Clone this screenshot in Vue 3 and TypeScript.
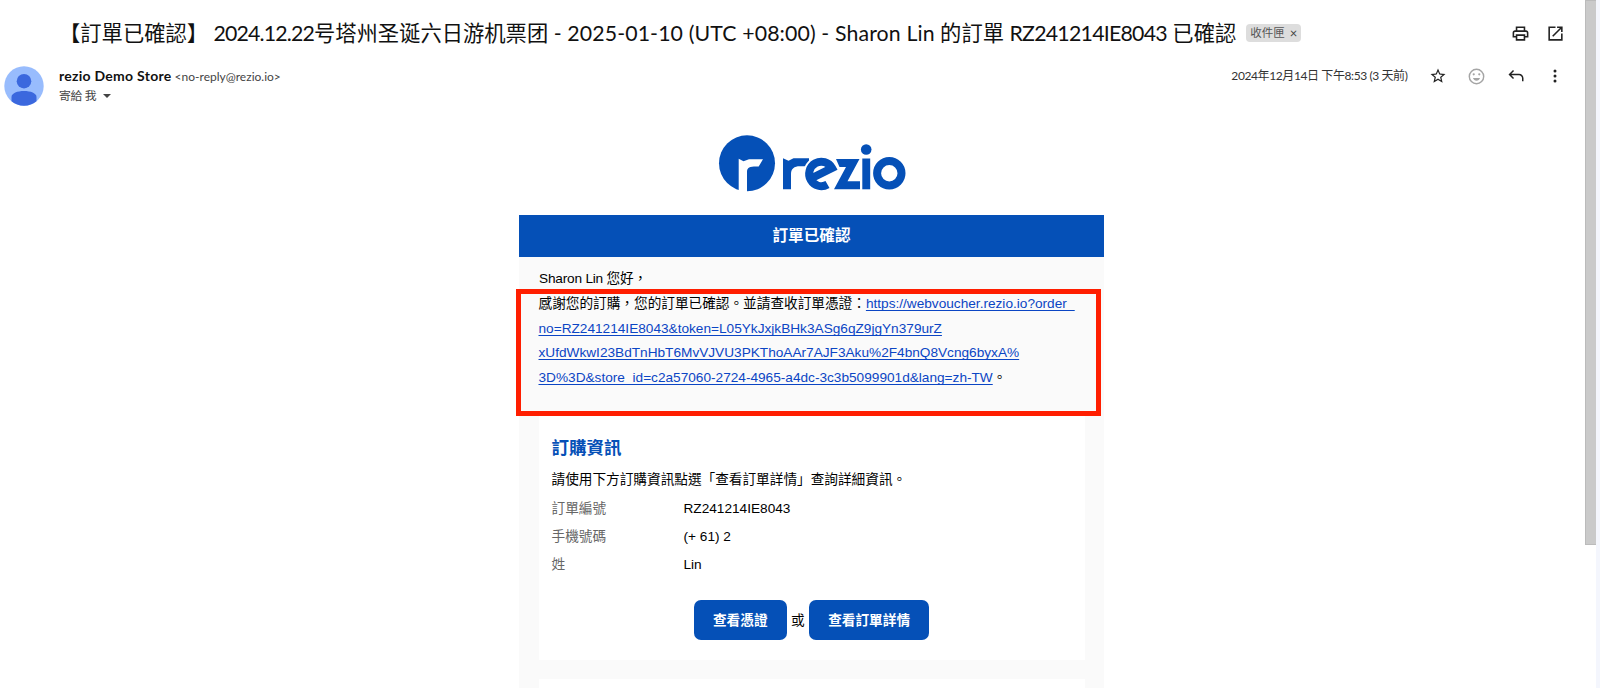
<script setup lang="ts">
import { ref } from 'vue'

interface OrderField {
  label: string
  value: string
}

const labelVisible = ref(true)
const starred = ref(false)

const fields: OrderField[] = [
  { label: '訂單編號', value: 'RZ241214IE8043' },
  { label: '手機號碼', value: '(+ 61) 2' },
  { label: '姓', value: 'Lin' },
]

const voucherLines = [
  'https://webvoucher.rezio.io?order_',
  'no=RZ241214IE8043&token=L05YkJxjkBHk3ASg6qZ9jgYn379urZ',
  'xUfdWkwI23BdTnHbT6MvVJVU3PKThoAAr7AJF3Aku%2F4bnQ8Vcng6byxA%',
  '3D%3D&store_id=c2a57060-2724-4965-a4dc-3c3b5099901d&lang=zh-TW',
]
</script>

<template>
  <div class="page">
    <main class="mail">
      <header class="subject">
        <h1>【訂單已確認】 <span class="day">2024.12.22</span>号塔州圣诞六日游机票团 <span class="slot">- 2025-01-10 (UTC +08:00) - Sharon Lin</span> 的訂單 <span class="order-no">RZ241214IE8043</span> 已確認</h1>
        <span v-if="labelVisible" class="chip">
          收件匣
          <button type="button" @click="labelVisible = false">×</button>
        </span>
        <div class="subject-actions">
          <svg viewBox="0 0 24 24" width="19" height="19">
            <path d="M19 8h-1V3H6v5H5c-1.66 0-3 1.34-3 3v6h4v4h12v-4h4v-6c0-1.66-1.34-3-3-3zM8 5h8v3H8V5zm8 14H8v-4h8v4zm4-4h-2v-2H6v2H4v-4c0-.55.45-1 1-1h14c.55 0 1 .45 1 1v4z" />
          </svg>
          <svg viewBox="0 0 24 24" width="19" height="19">
            <path d="M19 19H5V5h7V3H3v18h18v-9h-2v7zM14 3v2h3.59l-9.83 9.83 1.41 1.41L19 6.41V10h2V3h-7z" />
          </svg>
        </div>
      </header>

      <section class="sender">
        <svg class="avatar" viewBox="0 0 40 40" width="40" height="40">
          <circle cx="20" cy="20" r="19.7" fill="#98bcfd" />
          <circle cx="20" cy="15.2" r="7.3" fill="#3b68de" />
          <path d="M7.5 35.2V31c0-3.9 6-6 12.5-6s12.5 2.1 12.5 6v4.2a19.7 19.7 0 0 1-25 0z" fill="#3b68de" />
        </svg>
        <div class="who">
          <div class="from"><strong>rezio Demo Store</strong> <span>&lt;no-reply@rezio.io&gt;</span></div>
          <div class="to">寄給 我 <i class="caret"></i></div>
        </div>
        <span class="date">2024年12月14日 下午8:53 (3 天前)</span>
        <div class="sender-actions">
          <svg viewBox="0 0 24 24" width="18" height="18" :class="{ starred }" @click="starred = !starred">
            <path d="M22 9.24l-7.19-.62L12 2 9.19 8.63 2 9.24l5.46 4.73L5.82 21 12 17.27 18.18 21l-1.63-7.03L22 9.24zM12 15.4l-3.76 2.27 1-4.28-3.32-2.88 4.38-.38L12 6.1l1.71 4.04 4.38.38-3.32 2.88 1 4.28L12 15.4z" />
          </svg>
          <svg class="dim" viewBox="0 0 24 24" width="19" height="19">
            <path d="M12 2a10 10 0 1 0 0 20 10 10 0 0 0 0-20zm0 18.2a8.2 8.2 0 1 1 0-16.4 8.2 8.2 0 0 1 0 16.4zM8.5 10.7a1.4 1.4 0 1 0 0-2.8 1.4 1.4 0 0 0 0 2.8zm7 0a1.4 1.4 0 1 0 0-2.8 1.4 1.4 0 0 0 0 2.8zM7.5 14h9c-.7 2-2.4 3.3-4.5 3.3s-3.8-1.3-4.5-3.3z" />
          </svg>
          <svg viewBox="0 0 24 24" width="18" height="18">
            <path d="M9.4 14.6L5.8 11H16c2.2 0 4 1.8 4 4v4h2v-4c0-3.3-2.7-6-6-6H5.8l3.6-3.6L8 4l-6 6 6 6 1.4-1.4z" />
          </svg>
          <svg viewBox="0 0 24 24" width="20" height="20">
            <circle cx="12" cy="6" r="1.8" />
            <circle cx="12" cy="12" r="1.8" />
            <circle cx="12" cy="18" r="1.8" />
          </svg>
        </div>
      </section>

      <article class="letter">
        <div class="brand">
          <svg viewBox="0 0 190 60" width="190" height="60" role="img" aria-label="rezio">
            <circle cx="30" cy="30.3" r="28" />
            <path d="M21.7 25.8l4.8 2.5 5.5-2.1h14l-4.3 7.3c-8-.3-11.7.5-11.7 5.5V60h-8.3z" fill="#fff" />
            <path d="M66 25.3l5.5 2.5 5-2.5H92v8H83c-6 0-9 2.5-9 7.5v15.5h-8z" />
            <g fill="none" stroke-width="8">
              <circle cx="103.7" cy="40.2" r="13.2" stroke="#fff" />
              <path d="M94.5 45.3L115 35A12.2 12.2 0 1 0 110.5 51.5" stroke="#0550b7" />
              <circle cx="172.3" cy="40.2" r="12.2" stroke="#0550b7" />
            </g>
            <path d="M119 26h23.5l-12 22.3H143v8h-26L129 34h-6.5z" />
            <path d="M145.3 25.5h7.9v30.8h-7.9z" />
            <circle cx="149.2" cy="16.5" r="5.3" />
          </svg>
        </div>

        <div class="sheet">
          <div class="banner">訂單已確認</div>
          <div class="intro">
            <p class="hello">Sharon Lin 您好，</p>
            <div class="notice">
              <p>
                感謝您的訂購，您的訂單已確認。並請查收訂單憑證：<a href="#" @click.prevent>
                  <span v-for="line in voucherLines" :key="line" class="line">{{ line }}</span></a>。
              </p>
            </div>
          </div>

          <section class="card">
            <h2>訂購資訊</h2>
            <p>請使用下方訂購資訊點選「查看訂單詳情」查詢詳細資訊。</p>
            <dl>
              <template v-for="f in fields" :key="f.label">
                <dt>{{ f.label }}</dt>
                <dd>{{ f.value }}</dd>
              </template>
            </dl>
            <div class="buttons">
              <button type="button">查看憑證</button>
              <span>或</span>
              <button type="button">查看訂單詳情</button>
            </div>
          </section>
          <section class="card next"></section>
        </div>
      </article>
    </main>
    <div class="scrollbar"><div class="thumb"></div></div>
  </div>
</template>

<style>
body {
  margin: 0;
  overflow: hidden;
}
</style>

<style scoped>
.page {
  display: flex;
  height: 688px;
  overflow: hidden;
  background: #fff;
  color: #111;
  font-family: Lato, 'Noto Sans CJK TC', sans-serif;
}

.mail {
  flex: 1;
  min-width: 0;
}

.subject {
  display: flex;
  align-items: center;
  height: 66px;
  box-sizing: border-box;
  padding-left: 59px;
}

h1 {
  margin: 0;
  font-size: 21.3px;
  font-weight: 400;
  white-space: nowrap;
  line-height: 30px;
}

.day {
  letter-spacing: -0.85px;
}

.slot {
  letter-spacing: 0.12px;
}

.order-no {
  letter-spacing: -0.75px;
}

.chip {
  display: flex;
  align-items: center;
  gap: 5px;
  height: 18px;
  margin-left: 10px;
  padding: 0 4px;
  border-radius: 4px;
  background: #ddd;
  color: #555;
  font-size: 11.5px;
  line-height: 18px;
}

.chip button {
  border: 0;
  padding: 0;
  background: none;
  color: #444;
  font: inherit;
  font-size: 13px;
}

.subject-actions {
  display: flex;
  gap: 16px;
  margin-left: auto;
  padding-right: 20px;
}

svg {
  display: block;
  fill: #222;
}

.sender {
  display: flex;
  height: 40px;
}

.avatar {
  margin-left: 3.5px;
}

.who {
  flex: 1;
  margin-left: 15.5px;
  font-size: 12px;
}

.from {
  height: 20px;
  line-height: 20px;
  white-space: nowrap;
  color: #444;
}

.from strong {
  font-size: 14px;
  letter-spacing: 0.27px;
  color: #111;
}

.to {
  font-size: 11.8px;
  line-height: 20px;
  letter-spacing: -0.3px;
  color: #444;
}

.caret {
  display: inline-block;
  margin-left: 4px;
  vertical-align: 2px;
  border: 4px solid transparent;
  border-top-color: #444;
  border-bottom: 0;
}

.date {
  font-size: 12px;
  line-height: 20px;
  letter-spacing: -0.4px;
  color: #333;
  white-space: nowrap;
}

.sender-actions {
  display: flex;
  align-items: center;
  gap: 20.5px;
  height: 20px;
  margin-left: 21px;
  padding-right: 20px;
}

.dim {
  fill: #a5a5a5;
}

.starred {
  fill: #f4b400;
}

.letter {
  width: 585px;
  margin-left: 519px;
  font-family: 'Liberation Sans', 'Noto Sans CJK TC', sans-serif;
  font-size: 13.65px;
  color: #000;
}

.brand {
  height: 109px;
  box-sizing: border-box;
  padding: 26.5px 0 0 198px;
}

.brand svg {
  fill: #0550b7;
}

.sheet {
  height: 480px;
  background: #fafafa;
}

.banner {
  height: 42px;
  background: #0550b7;
  color: #fff;
  font-size: 15.6px;
  font-weight: 700;
  line-height: 41px;
  text-align: center;
}

.intro {
  height: 159px;
  padding-top: 10px;
  box-sizing: border-box;
}

p {
  margin: 0;
  line-height: 24.7px;
}

.hello {
  padding-left: 20px;
  height: 22px;
  letter-spacing: -0.2px;
}

.notice {
  position: relative;
  width: 585px;
  height: 127px;
  margin-left: -3px;
  box-sizing: border-box;
  border: 5px solid #ff1e00;
  padding-left: 17.5px;
  white-space: nowrap;
}

.notice p {
  margin-top: -2px;
}

.notice a {
  color: #0b45c4;
  text-underline-offset: 2px;
  text-decoration-skip-ink: none;
}

.line:not(:last-child)::after {
  content: '\A';
  white-space: pre;
}

.card {
  width: 546px;
  height: 244px;
  margin: 0 auto;
  box-sizing: border-box;
  padding: 19px 13px 0;
  background: #fff;
}

.card.next {
  margin-top: 19px;
}

h2 {
  margin: 0 0 6px;
  color: #0550b7;
  font-size: 17.5px;
  line-height: 27px;
}

dl {
  display: grid;
  grid-template-columns: 132px 1fr;
  grid-auto-rows: 28.4px;
  margin: 2px 0 0;
  line-height: 28.4px;
}

dt {
  color: #666;
}

dd {
  margin: 0;
}

.buttons {
  display: flex;
  justify-content: center;
  align-items: center;
  gap: 4.5px;
  margin-top: 20px;
}

.buttons button {
  height: 40px;
  border: 0;
  border-radius: 7px;
  padding: 0 19px 2px;
  background: #0550b7;
  color: #fff;
  font: inherit;
  font-weight: 700;
}

.buttons span {
  padding-bottom: 2px;
}

.scrollbar {
  width: 15px;
  box-sizing: border-box;
  border-right: 4px solid #f4f6fd;
}

.thumb {
  height: 544.5px;
  border: solid #bbb;
  border-width: 1px 0 1px 1px;
  box-sizing: border-box;
  background: #cacaca;
}
</style>
